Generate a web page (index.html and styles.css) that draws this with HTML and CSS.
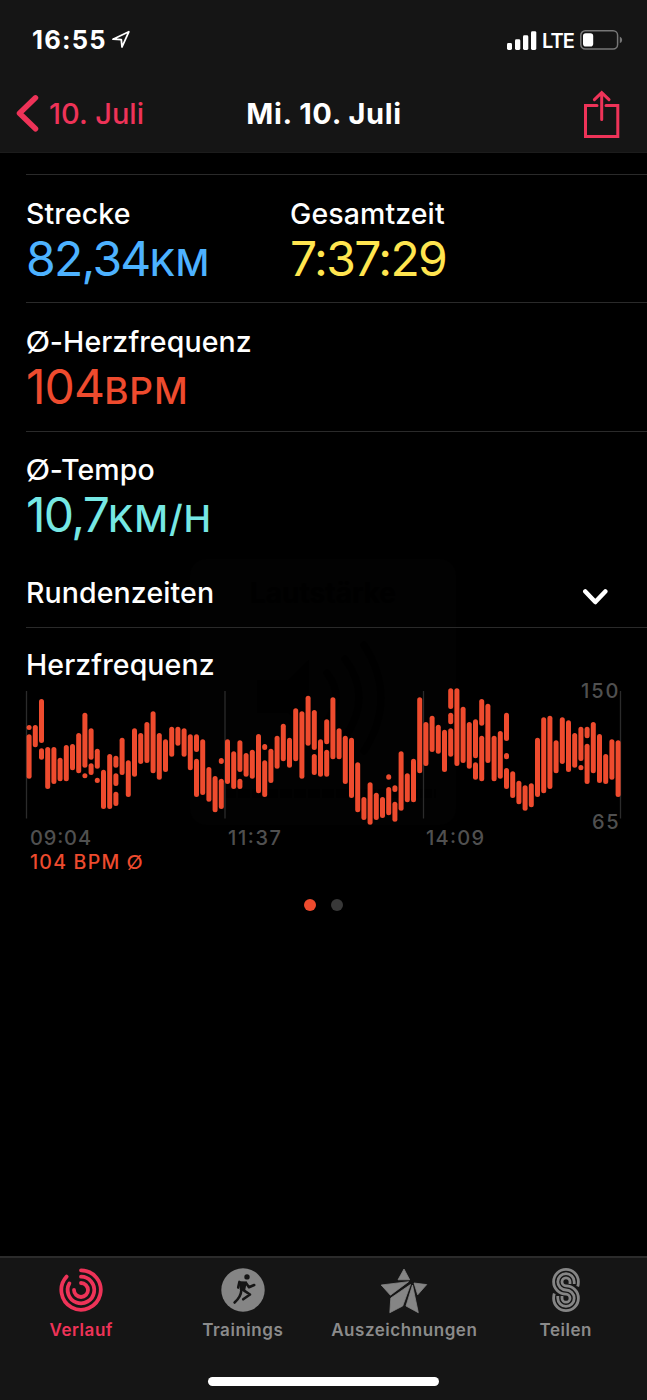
FILE: index.html
```html
<!DOCTYPE html>
<html lang="de">
<head>
<meta charset="utf-8">
<title>Mi. 10. Juli</title>
<link rel="stylesheet" href="styles.css">
</head>
<body>
<div class="screen">
  <header class="header">
    <div class="status">
      <span class="clock">16:55</span>
      <svg class="location" width="20" height="20" viewBox="0 0 20 20"><path d="M2 9.2 17.8 1.8 11 17 10.3 9.6Z"/></svg>
      <svg class="signal" width="30" height="19" viewBox="0 0 30 19"><rect x="0" y="12" width="5" height="7" rx="1.4"/><rect x="8" y="8.3" width="5.3" height="10.7" rx="1.4"/><rect x="16" y="4.3" width="5.3" height="14.7" rx="1.4"/><rect x="24" y="0.2" width="5.3" height="18.8" rx="1.4"/></svg>
      <span class="network">LTE</span>
      <svg class="battery" width="43" height="20" viewBox="0 0 43 20"><rect class="case" x=".8" y=".8" width="36.8" height="18.2" rx="4.5"/><path class="tip" d="M39.8 6.5q2.4 1.3 2.4 3.4t-2.4 3.4z"/><rect class="charge" x="3" y="3.2" width="10.2" height="13.4" rx="2.8"/></svg>
    </div>
    <nav class="nav">
      <a class="back"><svg width="24" height="40" viewBox="0 0 24 40"><path d="M19.5 3.8 3.5 19.3l16 15.5"/></svg><span>10. Juli</span></a>
      <h1 class="title">Mi. 10. Juli</h1>
      <svg class="share" width="36" height="48" viewBox="0 0 36 48"><path d="M13 15.5H1.5v31H33.8v-31H22"/><path class="arrow" d="M17.7 29.6V2.6M10.4 9.7 17.7 2.6 25 9.7"/></svg>
    </nav>
  </header>

  <main class="content">
    <div class="hud" aria-hidden="true">
      <div class="hud-title">Lautstärke</div>
      <svg width="266" height="200" viewBox="0 0 266 200"><path class="speaker" d="M67 71H98L119 51V124L98 104H67Z"/><path class="wave" d="M137 64q18 24 0 48M155 50q28 38 0 78M174 36q34 53 0 106"/></svg>
      <div class="hud-level"></div>
    </div>

    <section class="metrics">
      <div class="metric-row">
        <div class="metric"><div class="label">Strecke</div><div class="value blue">82,34<small>KM</small></div></div>
        <div class="metric"><div class="label">Gesamtzeit</div><div class="value yellow">7:37:29</div></div>
      </div>
      <div class="metric-row">
        <div class="metric"><div class="label"><span class="avg">Ø</span>-Herzfrequenz</div><div class="value red">104<small>BPM</small></div></div>
      </div>
      <div class="metric-row last">
        <div class="metric"><div class="label"><span class="avg">Ø</span>-Tempo</div><div class="value cyan">10,7<small>KM/H</small></div></div>
      </div>
    </section>

    <div class="laps"><span class="label">Rundenzeiten</span><svg width="26" height="18" viewBox="0 0 26 18"><path d="M3.3 3.5 13.3 14 23.3 3.5"/></svg></div>

    <section class="heart">
      <h2 class="label">Herzfrequenz</h2>
      <svg class="chart" width="647" height="200" viewBox="0 0 647 200">
        <path class="grid" d="M26.5 11V138.5M225 11V138.5M423.5 11V138.5M620.5 11V138.5"/>
        <g id="bars"></g>
        <g class="axis">
          <text x="581" y="17.6" textLength="37.5">150</text>
          <text x="592" y="149.3" textLength="26.5">65</text>
          <text x="30" y="164.8" textLength="61">09:04</text>
          <text x="228" y="164.8" textLength="53">11:37</text>
          <text x="426" y="164.8" textLength="58">14:09</text>
        </g>
        <text class="average" x="30" y="188.8" textLength="112.5">104 BPM <tspan class="avg">Ø</tspan></text>
      </svg>
      <div class="pager"><i class="on"></i><i></i></div>
    </section>
  </main>

  <footer class="tabs">
    <a class="tab active">
      <svg width="48" height="48" viewBox="0 0 48 48"><g class="rings"><path d="M24 4.3A19.7 19.7 0 1 1 9.6 10.6"/><path d="M24 10.7A13.3 13.3 0 1 1 12.4 17.4"/><path d="M24 17A7 7 0 1 1 17 24"/></g></svg>
      <span>Verlauf</span>
    </a>
    <a class="tab">
      <svg width="48" height="48" viewBox="0 0 48 48"><circle cx="24" cy="24" r="21.7"/><g class="runner"><circle cx="28" cy="10.9" r="2.7"/><path d="M20.5 15.2 28 15.6 26 24.8 20.8 24Z"/><path class="limb" d="M20.4 15.9 19.2 21.6M27 17 30 21.2 35.2 19M24.8 24.3 31 28.5 24.2 33.3M22.3 24.5C22 30 19 33.5 15.6 36.5"/></g></svg>
      <span>Trainings</span>
    </a>
    <a class="tab">
      <svg width="48" height="48" viewBox="0 0 48 48"><g class="star"><path d="M24 3 29.7 13.8H18Z"/><path d="M1.2 19 28.5 15.7 10.4 29.2Z"/><path d="M34 17 46.7 18.6 37.7 28.8Z"/><path d="M30.5 18.5 22.7 40 9.8 46.7 10.8 32Z"/><path d="M32.5 19 38.3 46.7 26 40Z"/></g></svg>
      <span>Auszeichnungen</span>
    </a>
    <a class="tab">
      <svg width="48" height="48" viewBox="0 0 48 48"><g class="strands"><path d="M35.7 20.5Q36.4 18.5 36.4 15.8A12.4 12.4 0 0 0 11.6 15.8A12.4 12.4 0 0 0 24 28.2A4 4 0 0 1 28 32.2A4 4 0 0 1 20 32.2V30"/><path d="M32.2 18V15.8A8.2 8.2 0 0 0 15.8 15.8A8.2 8.2 0 0 0 24 24A8.2 8.2 0 0 1 32.2 32.2A8.2 8.2 0 0 1 15.8 32.2V30"/><path d="M28 18V15.8A4 4 0 0 0 20 15.8A4 4 0 0 0 24 19.8A12.4 12.4 0 0 1 36.4 32.2A12.4 12.4 0 0 1 11.6 32.2Q11.6 29.5 12.3 27.5"/></g></svg>
      <span>Teilen</span>
    </a>
    <div class="home"></div>
  </footer>
</div>
<script src="chart.js"></script>
</body>
</html>
```
FILE: chart.js
```js
// One entry per interval: start-end pairs, in thirds of a pixel.
const intervals = `135-150,163-296 135-202 57-189,205-239 201-327 201-312 233-304 195-304 192-271
159-280 98-263,280-295 145-239,250-285 206-266,293-309 269-387 222-387 227-263,280-318,335-378 173-285
241-351 145-290 159-252 126-249 94-280 159-299 178-276 140-230
140-197 145-230 163-271 163-216,236-351 178-345 261-365 288-397 234-252,296-387
178-312 214-327 181-276,296-327 219-290 209-296 162-340 192-210,241-351 206-309
167-266 131-244 173-263 85-244 94-296 47-197 90-210,222-285 178-290
118-193,209-290 52-238 145-238 167-312 173-354 247-397 351-420 307-434
338-420 351-414 283-299,321-406 316-336,365-425 214-392 280-367 236-367 52-280
126-258 107-216 134-221 149-276 25-87,98-133,145-230 25-258 80-249 126-266
118-235,247-299 57-137,167-304 71-249 167-304 153-296 98-183,219-238,264-327 274-354 302-373
316-392 310-382 173-351 112-340 107-327 181-280 112-252 121-276
159-263 140-243,255-271 140-175,191-312 126-280 162-309 222-312 178-299 181-351`.split(/\s+/);

const bars = document.getElementById('bars');
intervals.forEach((interval, i) => {
  interval.split(',').forEach(range => {
    const [top, bottom] = range.split('-').map(Number);
    const bar = document.createElementNS('http://www.w3.org/2000/svg', 'rect');
    bar.setAttribute('x', (26.6 + i * 6.2).toFixed(2));
    bar.setAttribute('y', (top / 3).toFixed(2));
    bar.setAttribute('width', 5);
    bar.setAttribute('height', ((bottom - top) / 3).toFixed(2));
    bar.setAttribute('rx', 2.5);
    bars.appendChild(bar);
  });
});
```
FILE: styles.css
```css
* { box-sizing: border-box; }
body { margin: 0; background: #000; color: #fff; font-family: Inter, "Liberation Sans", sans-serif; }
svg { display: block; flex: none; }
.screen { width: 647px; height: 1400px; display: flex; flex-direction: column; overflow: hidden; }

.header { height: 153px; flex: none; background: #151515; border-bottom: 1px solid #1c1c1c; }
.status { height: 80px; display: flex; align-items: center; padding: 0 24px 0 32px; }
.clock { font-size: 25.5px; font-weight: 700; letter-spacing: 1.2px; line-height: 30px; width: 79px; margin-bottom: 1px; }
.location { fill: none; stroke: #fff; stroke-width: 1.8; stroke-linejoin: round; }
.signal { margin-left: auto; fill: #fff; }
.network { font-size: 20px; font-weight: 600; width: 31px; margin: 1px 7px 0 5px; letter-spacing: -.9px; }
.battery .case { fill: none; stroke: #777; stroke-width: 1.5; }
.battery .tip { fill: #777; }
.battery .charge { fill: #fff; }
.nav { height: 68px; display: grid; grid-template-columns: 200px 1fr 200px; align-items: center; padding: 0 27px 0 16px; }
.back { display: flex; align-items: center; color: #ee3358; font-size: 29px; font-weight: 500; }
.back svg { fill: none; stroke: #ee3358; stroke-width: 5.5; stroke-linecap: round; stroke-linejoin: round; }
.back span { margin: 0 0 1px 9px; }
.title { margin: 0 0 1px 12px; text-align: center; font-size: 29px; font-weight: 700; letter-spacing: .6px; white-space: nowrap; }
.share { justify-self: end; fill: none; stroke: #ee3358; stroke-width: 3; stroke-linecap: round; }

.content { flex: 1; position: relative; padding-top: 21px; }
.content > section, .laps { position: relative; }
.metric-row { height: 128.5px; margin-left: 26px; border-top: 1px solid #2a2a2a; padding-top: 21.5px; display: grid; grid-template-columns: 264px 1fr; }
.metric-row:first-child { height: 128px; }
.metric-row.last { height: 127px; padding-top: 21px; }
.label { font-size: 28.5px; font-weight: 550; line-height: 34px; margin: 0; letter-spacing: .1px; white-space: nowrap; }
.avg { font-family: Lato, Inter, sans-serif; }
.label .avg { font-size: 29.5px; line-height: 1; }
.value { font-size: 48px; line-height: 50px; margin-top: 3px; font-weight: 400; letter-spacing: -1.7px; white-space: nowrap; }
.value small { font-size: 37px; font-weight: 500; letter-spacing: .3px; }
.value.yellow { letter-spacing: -1.6px; }
.value.red { letter-spacing: -.9px; }
.value.red small { letter-spacing: .9px; }
.value.cyan small { letter-spacing: .8px; }
.blue { color: #4db2ff; }
.yellow { color: #ffe54f; }
.red { color: #ee4b2e; }
.cyan { color: #76e8e4; }
.laps { height: 70.5px; margin-left: 26px; padding: 1px 39px 0 0; border-bottom: 1px solid #2a2a2a; display: flex; justify-content: space-between; align-items: center; }
.laps svg { fill: none; stroke: #fff; stroke-width: 4.5; stroke-linecap: round; stroke-linejoin: round; margin-top: 8px; }
.heart { padding-top: 20px; }
.heart h2 { padding-left: 26px; height: 32px; }
.grid { stroke: #2b2b2b; stroke-width: 1.3; }
#bars { fill: #ee4b2e; }
.axis { font-size: 20px; font-weight: 500; fill: #505050; }
.average { font-size: 19.5px; font-weight: 500; fill: #ee4b2e; }
.pager { display: flex; justify-content: center; gap: 15.5px; margin-top: 19px; }
.pager i { width: 12px; height: 12px; border-radius: 50%; background: #383838; }
.pager .on { background: #ee4b2e; }

.hud { position: absolute; left: 190px; top: 406px; width: 266px; height: 266px; border-radius: 16px; background: #020202; }
.hud-title { color: #000; font-size: 28px; font-weight: 700; text-align: center; line-height: 32px; padding-top: 18px; }
.speaker { fill: #000; }
.wave { fill: none; stroke: #000; stroke-width: 7; stroke-linecap: round; }
.hud-level { height: 9px; margin: -20px 20px 0; background: repeating-linear-gradient(90deg, #000 0 12px, #020202 12px 14px); }

.tabs { height: 144px; flex: none; background: #151515; border-top: 2px solid #2b2b2b; padding: 7.5px 0 0 .5px; display: grid; grid-template-columns: repeat(4, 161.5px); grid-template-rows: 111.5px auto; }
.tab { display: flex; flex-direction: column; align-items: center; color: #8b8b8b; font-size: 17px; font-weight: 600; letter-spacing: .55px; }
.tab span { margin-top: 6.5px; line-height: 20px; }
.tab svg { fill: #858585; }
.tab.active { color: #ee3358; }
.tab .rings { fill: none; stroke: #ee3358; stroke-width: 3.8; stroke-linecap: round; }
.runner { fill: #151515; }
.runner .limb { fill: none; stroke: #151515; stroke-width: 2.6; stroke-linecap: round; stroke-linejoin: round; }
.star { stroke: #858585; stroke-width: .8; stroke-linejoin: round; }
.tab .strands { fill: none; stroke: #858585; stroke-width: 2.8; }
.home { grid-column: 1 / -1; justify-self: center; width: 231.5px; height: 9px; border-radius: 5px; background: #fff; }
```
